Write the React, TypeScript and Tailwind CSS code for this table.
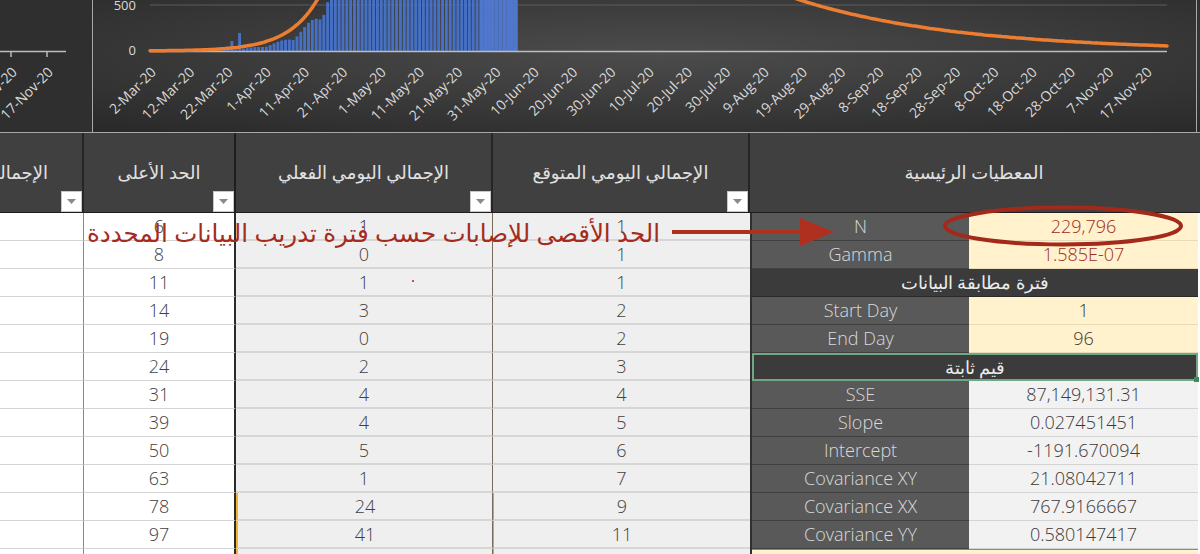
import React from 'react';

const DAY = 3.83;
const X0 = 150;
const BASE = 51;

const dates = [
  '2-Mar-20', '12-Mar-20', '22-Mar-20', '1-Apr-20', '11-Apr-20', '21-Apr-20', '1-May-20', '11-May-20',
  '21-May-20', '31-May-20', '10-Jun-20', '20-Jun-20', '30-Jun-20', '10-Jul-20', '20-Jul-20', '30-Jul-20',
  '9-Aug-20', '19-Aug-20', '29-Aug-20', '8-Sep-20', '18-Sep-20', '28-Sep-20', '8-Oct-20', '18-Oct-20',
  '28-Oct-20', '7-Nov-20', '17-Nov-20',
];

const rows: [number, number, number][] = [
  [6, 1, 1], [8, 0, 1], [11, 1, 1], [14, 3, 2], [19, 0, 2], [24, 2, 3],
  [31, 4, 4], [39, 4, 5], [50, 5, 6], [63, 1, 7], [78, 24, 9], [97, 41, 11],
];

type PanelRow = { kind: 'pair'; label: string; value: string; tone: 'cream' | 'gray'; red?: boolean } | { kind: 'section'; label: string; selected?: boolean };

const panel: PanelRow[] = [
  { kind: 'pair', label: 'N', value: '229,796', tone: 'cream', red: true },
  { kind: 'pair', label: 'Gamma', value: '1.585E-07', tone: 'cream', red: true },
  { kind: 'section', label: 'فترة مطابقة البيانات' },
  { kind: 'pair', label: 'Start Day', value: '1', tone: 'cream' },
  { kind: 'pair', label: 'End Day', value: '96', tone: 'cream' },
  { kind: 'section', label: 'قيم ثابتة', selected: true },
  { kind: 'pair', label: 'SSE', value: '87,149,131.31', tone: 'gray' },
  { kind: 'pair', label: 'Slope', value: '0.027451451', tone: 'gray' },
  { kind: 'pair', label: 'Intercept', value: '-1191.670094', tone: 'gray' },
  { kind: 'pair', label: 'Covariance XY', value: '21.08042711', tone: 'gray' },
  { kind: 'pair', label: 'Covariance XX', value: '767.9166667', tone: 'gray' },
  { kind: 'pair', label: 'Covariance YY', value: '0.580147417', tone: 'gray' },
];

// fitted curve height in px above the baseline
function curveH(x: number) {
  const rise = 29 * Math.pow(2, (x - 300) / 21);
  const fall = 51 * Math.exp(-(x - 800) / 160);
  return Math.min(rise, fall, 80);
}

function MainChart() {
  const pts: string[] = [];
  for (let x = X0; x <= 1167; x += 3) pts.push(`${x},${(BASE - curveH(x)).toFixed(1)}`);

  const bars = [];
  for (let d = 18; d < 96; d++) {
    const x = X0 + d * DAY;
    const noise = 0.5 + 0.25 * Math.abs(Math.sin(d * 12.9898));
    let h = Math.min(200, 29 * Math.pow(2, (x - 300) / 19) * noise);
    if (d === 23) h = 18;
    if (d === 21) h = 10;
    bars.push(
      <rect key={d} x={x} y={BASE - h} width={d >= 86 ? DAY + 0.1 : DAY - 0.9} height={h} fill={d >= 86 ? '#4f77cc' : '#4570c4'} />,
    );
  }

  return (
    <svg width="1104" height="132" viewBox="93 0 1104 132" className="block">
      <line x1="150" y1="5" x2="1167" y2="5" stroke="#5c5c5c" strokeWidth="1" />
      <text x="136" y="10" textAnchor="end" fontSize="13" fill="#d9d9d9">500</text>
      <text x="136" y="55" textAnchor="end" fontSize="13" fill="#d9d9d9">0</text>
      {bars}
      <line x1="150" y1="51.5" x2="1167" y2="51.5" stroke="#bdbdbd" strokeWidth="1.5" />
      <polyline points={pts.join(' ')} fill="none" stroke="#ed7d31" strokeWidth="3.5" strokeLinecap="round" />
      {dates.map((d, i) => {
        const x = X0 + i * 10 * DAY + 7;
        return (
          <text key={d} x={x} y={73} textAnchor="end" fontSize="14" fill="#d9d9d9" transform={`rotate(-45 ${x} 73)`}>
            {d}
          </text>
        );
      })}
    </svg>
  );
}

function SideChart() {
  return (
    <svg width="92" height="132" className="block">
      <line x1="0" y1="51.5" x2="66" y2="51.5" stroke="#bdbdbd" strokeWidth="1.5" />
      <line x1="11" y1="51" x2="11" y2="57" stroke="#bdbdbd" strokeWidth="1.5" />
      <line x1="47" y1="51" x2="47" y2="57" stroke="#bdbdbd" strokeWidth="1.5" />
      <text x="18" y="73" textAnchor="end" fontSize="14" fill="#d9d9d9" transform="rotate(-45 18 73)">7-Nov-20</text>
      <text x="54" y="73" textAnchor="end" fontSize="14" fill="#d9d9d9" transform="rotate(-45 54 73)">17-Nov-20</text>
    </svg>
  );
}

function FilterButton() {
  return (
    <span className="absolute bottom-0 right-0 flex h-[21px] w-[21px] items-center justify-center border border-[#c8c8c8] bg-white">
      <svg width="9" height="5" viewBox="0 0 9 5">
        <path d="M0 0h9L4.5 5z" fill="#8a8a8a" />
      </svg>
    </span>
  );
}

export default function App() {
  return (
    <div className="relative h-[554px] w-[1200px] overflow-hidden bg-white font-['Open_Sans','DejaVu_Sans',sans-serif]">
      {/* charts */}
      <div className="flex h-[133px] border-b border-[#a8a8a8] bg-[radial-gradient(ellipse_at_55%_40%,#4c4c4c_0%,#3b3b3b_45%,#262626_100%)]">
        <div className="w-[93px] border-r border-[#a8a8a8] bg-[#2f2f2f]">
          <SideChart />
        </div>
        <div className="w-[1104px] border-r border-[#a8a8a8]">
          <MainChart />
        </div>
      </div>

      {/* header */}
      <div className="flex h-[79px] bg-[#404040] text-[18px] text-[#e2e2e2]" dir="ltr">
        <div className="relative flex w-[84px] items-center justify-end overflow-hidden whitespace-nowrap border-r-2 border-[#262626] pr-[34px] pb-[1px]">
          <span dir="rtl">الإجمالي التراكمي</span>
          <FilterButton />
        </div>
        <div className="relative flex w-[152px] items-center justify-center border-r-2 border-[#1e1e1e] pb-[1px]">
          <span dir="rtl">الحد الأعلى</span>
          <FilterButton />
        </div>
        <div className="relative flex w-[257px] items-center justify-center border-r-2 border-[#262626] pb-[1px]">
          <span dir="rtl">الإجمالي اليومي الفعلي</span>
          <FilterButton />
        </div>
        <div className="relative flex w-[257px] items-center justify-center border-r-2 border-[#262626] pb-[1px]">
          <span dir="rtl">الإجمالي اليومي المتوقع</span>
          <FilterButton />
        </div>
        <div className="flex w-[448px] items-center justify-center pb-[1px]">
          <span dir="rtl">المعطيات الرئيسية</span>
        </div>
      </div>

      {/* body */}
      <div className="flex border-t border-[#1e1e1e]">
        <div className="w-[750px] text-[18px] font-light text-[#404040]">
          {[...rows, null].map((r, i) => (
            <div key={i} className="flex h-[28px]">
              <div className="w-[84px] border-b border-r border-[#d4d4d4] border-r-[#8a8a8a] bg-white" />
              <div className="flex w-[152px] items-center justify-center border-b border-r-2 border-[#d4d4d4] border-r-[#2b2b2b] bg-white">
                {r ? r[0] : ''}
              </div>
              <div className={`flex w-[257px] items-center justify-center border-b-2 border-r border-[#d6d6d6] bg-[#efefef] ${i >= 10 ? 'border-l-2 border-l-[#f2b230]' : ''} border-r-[#7a6a5a]`}>
                {r ? r[1] : ''}
              </div>
              <div className={`flex w-[257px] items-center justify-center border-b-2 border-[#d6d6d6] bg-[#efefef] ${i >= 10 ? 'border-l border-l-[#e8a030]' : ''}`}>
                {r ? r[2] : ''}
              </div>
            </div>
          ))}
        </div>

        <div className="w-[448px] border-l-2 border-[#303030] text-[18px] font-light">
          {panel.map((p, i) =>
            p.kind === 'section' ? (
              <div
                key={i}
                className={`relative flex h-[28px] items-center justify-center bg-[#3b3b3b] text-[#ececec] ${p.selected ? 'border-2 border-[#6fa787]' : 'border-b border-[#2a2a2a]'}`}
              >
                <span dir="rtl">{p.label}</span>
                {p.selected ? <span className="absolute -bottom-[3px] -right-[3px] h-[5px] w-[5px] bg-[#3f8a5c]" /> : null}
              </div>
            ) : (
              <div key={i} className="flex h-[28px]">
                <div className="flex w-[218px] items-center justify-center border-b border-[#404040] bg-[#595959] text-[#dadada]">
                  {p.label}
                </div>
                <div
                  className={`flex w-[230px] items-center justify-center border-b ${p.tone === 'cream' ? 'border-[#e8dcb8] bg-[#fff2cc]' : 'border-[#d4d4d4] bg-[#f2f2f2]'} ${p.red ? 'text-[#a3291b]' : 'text-[#3a3a3a]'}`}
                >
                  {p.value}
                </div>
              </div>
            ),
          )}
          <div className="h-[28px] border-t border-[#8a8a8a] bg-[#fff2cc]" />
        </div>
      </div>

      {/* annotation overlay */}
      <div
        dir="rtl"
        className="absolute left-[84px] top-[218px] w-[576px] whitespace-nowrap text-right text-[24.5px] leading-[30px] text-[#a52b1c]"
      >
        الحد الأقصى للإصابات حسب فترة تدريب البيانات المحددة
      </div>
      <svg className="absolute left-[660px] top-[215px]" width="180" height="36" viewBox="0 0 180 36">
        <line x1="12" y1="17" x2="145" y2="17" stroke="#b0301f" strokeWidth="4" />
        <path d="M140 3 L174 17 L140 31 Z" fill="#b0301f" />
      </svg>
      <svg className="absolute left-[940px] top-[204px]" width="248" height="46" viewBox="0 0 248 46">
        <ellipse cx="123" cy="22" rx="118" ry="18.5" fill="none" stroke="#a3291b" strokeWidth="4" />
      </svg>
      <span className="absolute left-[412px] top-[280px] h-[2px] w-[2px] rounded-full bg-[#a3291b]" />
    </div>
  );
}
